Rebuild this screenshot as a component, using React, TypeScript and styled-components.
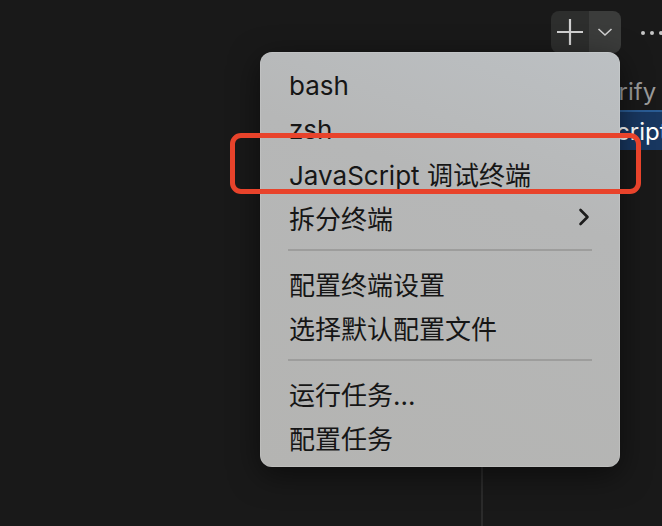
import React from 'react';
import styled, { createGlobalStyle } from 'styled-components';

const GlobalStyle = createGlobalStyle`
  html, body {
    margin: 0;
    padding: 0;
    background: #191919;
    overflow: hidden;
  }
  body {
    font-family: Inter, "Noto Sans CJK SC", sans-serif;
  }
`;

type MenuEntry =
  | { kind: 'item'; label: string; submenu?: boolean }
  | { kind: 'separator' };

const entries: MenuEntry[] = [
  { kind: 'item', label: 'bash' },
  { kind: 'item', label: 'zsh' },
  { kind: 'item', label: 'JavaScript 调试终端' },
  { kind: 'item', label: '拆分终端', submenu: true },
  { kind: 'separator' },
  { kind: 'item', label: '配置终端设置' },
  { kind: 'item', label: '选择默认配置文件' },
  { kind: 'separator' },
  { kind: 'item', label: '运行任务...' },
  { kind: 'item', label: '配置任务' },
];

const Page = styled.div`
  position: relative;
  width: 662px;
  height: 526px;
  display: grid;
  grid-template-columns: 481px 2px 1fr;
  grid-template-rows: 60px 1fr;
  background: #191919;
  overflow: hidden;
`;

const Toolbar = styled.div`
  grid-column: 1 / 4;
  display: flex;
  align-items: flex-start;
  justify-content: flex-end;
  padding: 11px 0 0 0;
  gap: 20px;
`;

const SplitButton = styled.div`
  display: flex;
  height: 42px;
  border-radius: 8px;
  overflow: hidden;
`;

const ButtonPart = styled.div<{ $wide?: boolean; $active?: boolean }>`
  width: ${(p) => (p.$wide ? 38 : 32)}px;
  display: grid;
  place-items: center;
  background: ${(p) => (p.$active ? '#3b3c3b' : '#2d2e2d')};
`;

const More = styled.div`
  display: flex;
  gap: 5px;
  padding-top: 20px;
  width: 22px;
  margin-right: -1px;
`;

const Dot = styled.span`
  width: 4px;
  height: 4px;
  border-radius: 50%;
  background: #c6c6c6;
  flex: none;
`;

const Editor = styled.div`
  grid-row: 2;
  grid-column: 1;
`;

const Divider = styled.div`
  grid-row: 2;
  grid-column: 2;
  background: #2b2b2b;
`;

const TabList = styled.div`
  grid-row: 2;
  grid-column: 3;
  display: flex;
  flex-direction: column;
  padding-top: 10px;
  min-width: 0;
`;

const TabRow = styled.div<{ $selected?: boolean; $indent: number }>`
  height: 40px;
  display: flex;
  align-items: center;
  padding-left: ${(p) => p.$indent}px;
  white-space: nowrap;
  overflow: hidden;
  font-size: 24px;
  color: ${(p) => (p.$selected ? '#ffffff' : '#9b9b9b')};
  background: ${(p) => (p.$selected ? '#183760' : 'transparent')};
  border-top: 2px solid ${(p) => (p.$selected ? '#2a5c94' : 'transparent')};
  box-sizing: border-box;
`;

const Menu = styled.div`
  position: absolute;
  left: 260px;
  top: 52px;
  width: 360px;
  box-sizing: border-box;
  padding: 11px 28px 8px 28px;
  border-radius: 12px;
  background: linear-gradient(200deg, #bcc0c3 0%, #b6b7b7 35%, #b4b4b2 100%);
  box-shadow: 0 8px 30px rgba(0, 0, 0, 0.5), inset 0 0 0 0.5px rgba(255, 255, 255, 0.25);
  display: flex;
  flex-direction: column;
`;

const Item = styled.div`
  height: 44px;
  display: flex;
  align-items: center;
  justify-content: space-between;
  padding-left: 1px;
  font-size: 26px;
  color: #161616;
  white-space: nowrap;
`;

const Separator = styled.div`
  height: 22px;
  display: flex;
  align-items: center;

  &::after {
    content: '';
    flex: 1;
    height: 2px;
    background: #9d9d9c;
  }
`;

const Highlight = styled.div`
  position: absolute;
  left: 230px;
  top: 133px;
  width: 411px;
  height: 61px;
  box-sizing: border-box;
  border: 5px solid #e8432b;
  border-radius: 11px;
`;

function PlusIcon () {
  return (
    <svg width="28" height="28" viewBox="0 0 28 28">
      <path d="M14 1v26M1 14h26" stroke="#d0d0d0" strokeWidth="2.2" fill="none" />
    </svg>
  );
}

function ChevronDown () {
  return (
    <svg width="16" height="10" viewBox="0 0 16 10">
      <path d="M1.5 2l6.5 6 6.5-6" stroke="#cfcfcf" strokeWidth="1.6" fill="none" />
    </svg>
  );
}

function ChevronRight () {
  return (
    <svg width="12" height="18" viewBox="0 0 12 18" style={{ marginRight: 2 }}>
      <path d="M2.5 2l7 7-7 7" stroke="#1c1c1c" strokeWidth="2.6" fill="none" strokeLinecap="round" strokeLinejoin="round" />
    </svg>
  );
}

function App (): React.ReactElement {
  return (
    <Page>
      <GlobalStyle />
      <Toolbar>
        <SplitButton>
          <ButtonPart $wide>
            <PlusIcon />
          </ButtonPart>
          <ButtonPart $active>
            <ChevronDown />
          </ButtonPart>
        </SplitButton>
        <More>
          <Dot />
          <Dot />
          <Dot />
        </More>
      </Toolbar>
      <Editor />
      <Divider />
      <TabList>
        <TabRow $indent={45}>npm: verify</TabRow>
        <TabRow $indent={64} $selected>JavaScript</TabRow>
      </TabList>
      <Menu>
        {entries.map((entry, i) =>
          entry.kind === 'separator' ? (
            <Separator key={i} />
          ) : (
            <Item key={i}>
              <span>{entry.label}</span>
              {entry.submenu && <ChevronRight />}
            </Item>
          )
        )}
      </Menu>
      <Highlight />
    </Page>
  );
}

export default App;
